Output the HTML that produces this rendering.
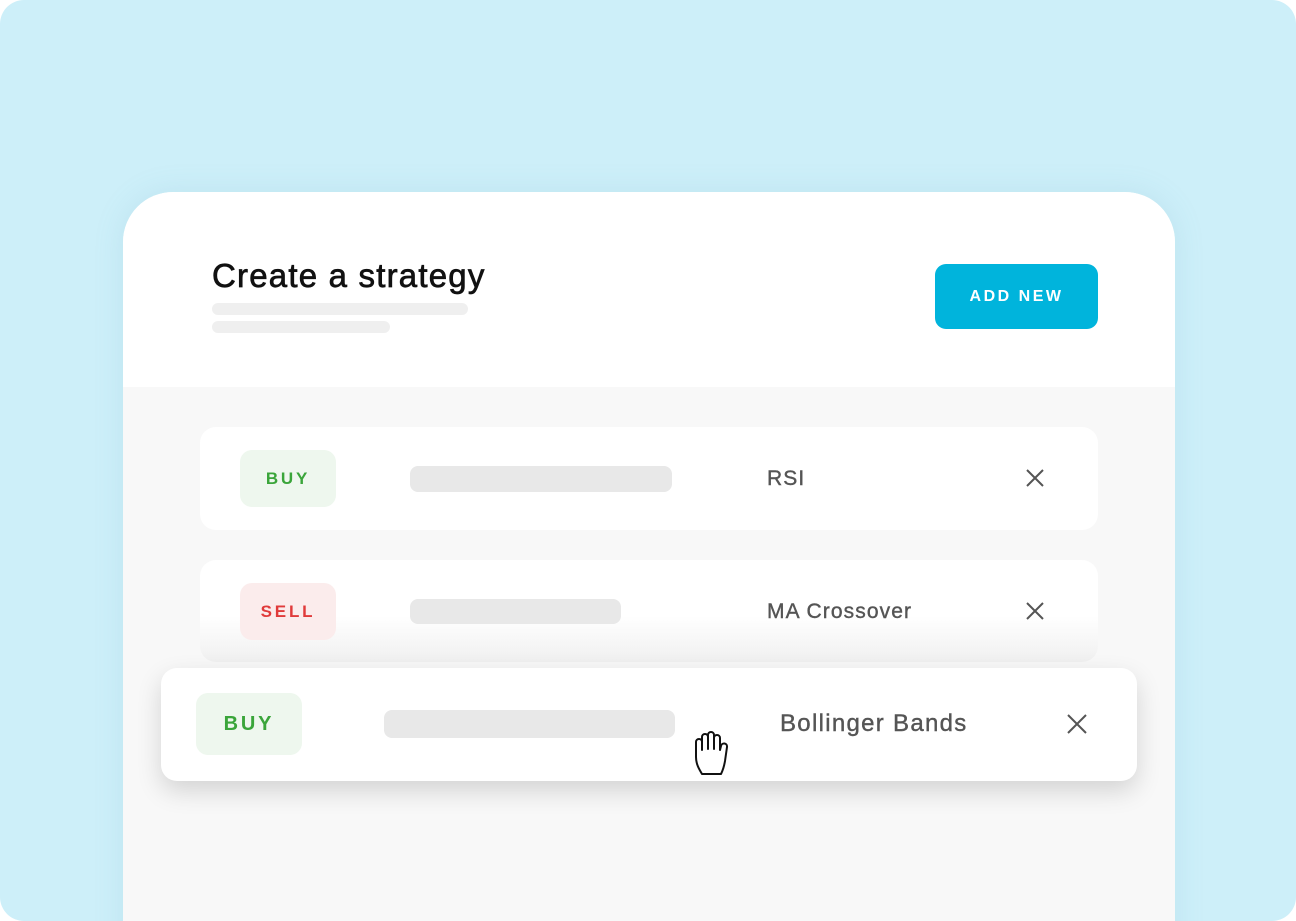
<!DOCTYPE html><html><head><style>
body{margin:0;width:1296px;height:921px;background:#fff;font-family:"Liberation Sans",sans-serif;overflow:hidden;position:relative}
.bg{position:absolute;left:0;top:0;width:1296px;height:921px;background:#cdeff9;border-radius:24px;overflow:hidden}
.card{position:absolute;left:123px;top:192px;width:1052px;height:760px;background:#f8f8f8;border-radius:50px 50px 0 0;overflow:hidden;box-shadow:0 0 30px rgba(100,170,190,.15)}
.head{position:absolute;left:0;top:0;width:100%;height:195px;background:#fff}
.abs{position:absolute}
.row{position:absolute;background:#fff;border-radius:16px}
.badge{position:absolute;border-radius:12px;display:flex;align-items:center;justify-content:center;font-weight:bold;letter-spacing:2.8px}
.bar{position:absolute;background:#e8e8e8;border-radius:8px}
.lbl{position:absolute;color:#555;font-size:21px;letter-spacing:1.1px;-webkit-text-stroke:0.4px #555}
</style></head><body>
<div class="bg">
<div class="card">
<div class="head">
<div class="abs" style="left:89px;top:65px;font-size:33px;color:#111;letter-spacing:1.2px;-webkit-text-stroke:0.7px #111">Create a strategy</div>
<div class="abs" style="left:89px;top:111px;width:256px;height:12px;background:#efefef;border-radius:6px"></div>
<div class="abs" style="left:89px;top:129px;width:178px;height:12px;background:#efefef;border-radius:6px"></div>
<div class="abs" style="left:812px;top:72px;width:163px;height:65px;background:#00b4dc;border-radius:11px;color:#fff;font-weight:bold;font-size:16px;letter-spacing:2.5px;display:flex;align-items:center;justify-content:center">ADD NEW</div>
</div>
</div>
<div class="row" style="left:200px;top:427px;width:898px;height:103px">
<div class="badge" style="left:40px;top:23px;width:96px;height:57px;background:#eef7ee;color:#3aa53a;font-size:17px">BUY</div>
<div class="bar" style="left:210px;top:39px;width:262px;height:26px"></div>
<div class="lbl" style="left:567px;top:40px">RSI</div>
<svg class="abs" style="left:826px;top:42px" width="18" height="18"><path d="M1 1L17 17M17 1L1 17" stroke="#555" stroke-width="2"/></svg>
</div>
<div class="row" style="left:200px;top:560px;width:898px;height:102px;background:linear-gradient(#fff 55%,#f0f0f0)">
<div class="badge" style="left:40px;top:23px;width:96px;height:57px;background:#fbecec;color:#e03b3b;font-size:17px">SELL</div>
<div class="bar" style="left:210px;top:39px;width:211px;height:25px"></div>
<div class="lbl" style="left:567px;top:40px">MA Crossover</div>
<svg class="abs" style="left:826px;top:42px" width="18" height="18"><path d="M1 1L17 17M17 1L1 17" stroke="#555" stroke-width="2"/></svg>
</div>
<div class="row" style="left:161px;top:668px;width:976px;height:113px;box-shadow:0 10px 25px rgba(0,0,0,.15)">
<div class="badge" style="left:35px;top:25px;width:106px;height:62px;background:#eef7ee;color:#3aa53a;font-size:20px">BUY</div>
<div class="bar" style="left:223px;top:42px;width:291px;height:28px"></div>
<div class="lbl" style="left:619px;top:42px;font-size:24px;letter-spacing:1.3px">Bollinger Bands</div>
<svg class="abs" style="left:906px;top:46px" width="20" height="20"><path d="M1 1L19 19M19 1L1 19" stroke="#555" stroke-width="2"/></svg>
<svg class="abs" style="left:528px;top:60px" width="46" height="50" viewBox="0 0 46 50"><path d="M7 22V14a3 3 0 0 1 6 0v8V9a3 3 0 0 1 6 0v12V7a3 3 0 0 1 6 0v14V10a3 3 0 0 1 6 0v12l1-4a3 3 0 0 1 6 1l-2 14c-1 6-2 9-4 13H13c-3-5-6-10-6-17z" fill="#fff" stroke="#111" stroke-width="2" stroke-linejoin="round"/></svg>
</div>
</div>
</body></html>
